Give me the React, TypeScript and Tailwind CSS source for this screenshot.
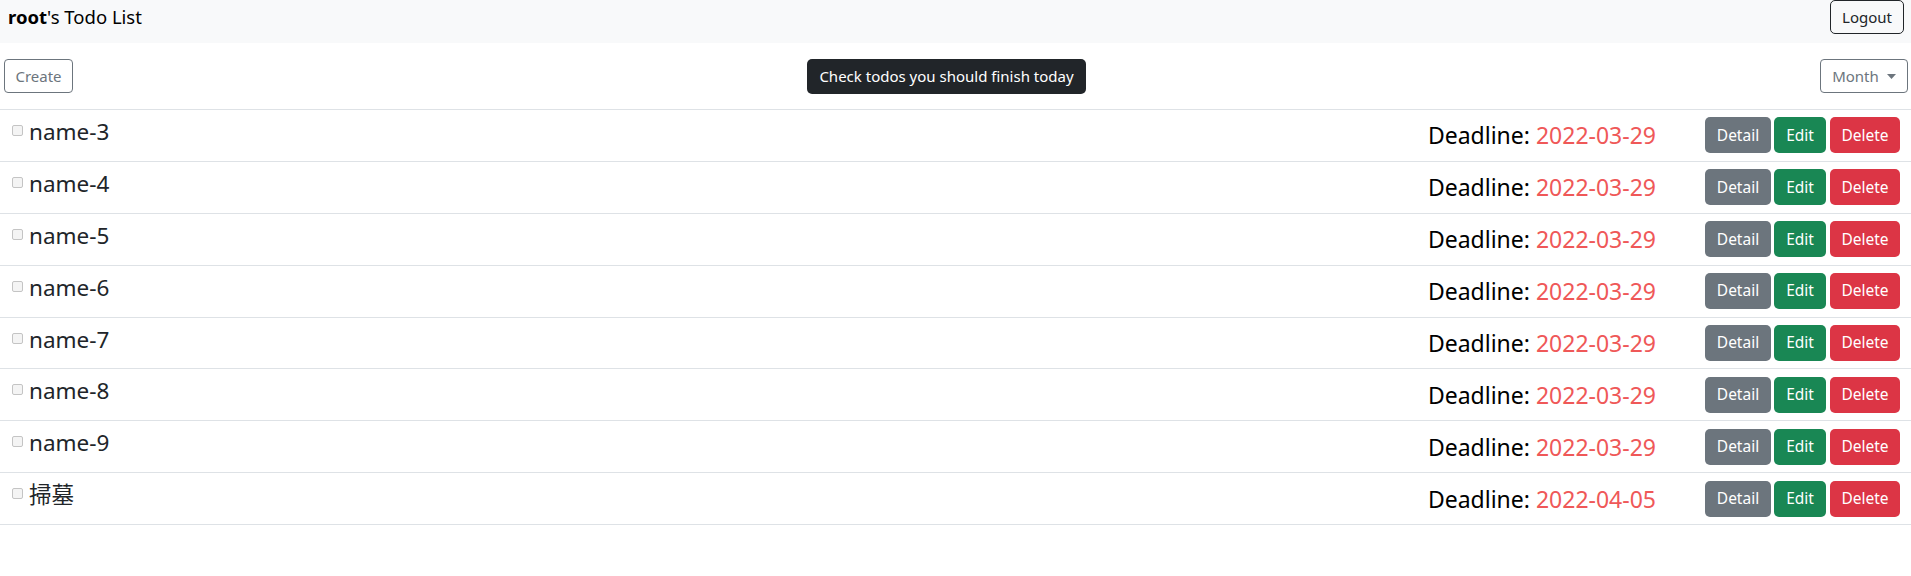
import React from "react";

const rows = [
  { name: "name-3", date: "2022-03-29" },
  { name: "name-4", date: "2022-03-29" },
  { name: "name-5", date: "2022-03-29" },
  { name: "name-6", date: "2022-03-29" },
  { name: "name-7", date: "2022-03-29" },
  { name: "name-8", date: "2022-03-29" },
  { name: "name-9", date: "2022-03-29" },
  { name: "掃墓", date: "2022-04-05" },
];

export default function App() {
  return (
    <div
      className="w-[1911px] h-[576px] bg-white text-[#212529] overflow-hidden"
      style={{ fontFamily: '"Noto Sans", "Noto Sans CJK TC", sans-serif' }}
    >
      <header className="h-[43px] bg-[#f8f9fa] flex items-start justify-between">
        <div className="h-[34px] pl-2 flex items-center text-[18.5px] text-black">
          <span className="font-bold">root</span>
          <span>'s Todo List</span>
        </div>
        <button className="mr-[7px] h-[34px] w-[74px] border border-[#212529] rounded-[5px] text-[15px] text-[#212529] bg-transparent">
          Logout
        </button>
      </header>

      <div className="relative flex items-center justify-between py-4 pl-1 pr-[3px]">
        <button className="h-[34px] w-[69px] border border-[#6c757d] rounded-[4px] text-[15px] text-[#6c757d] bg-white">
          Create
        </button>
        <div className="absolute left-[807px] top-[16px] h-[35px] w-[279px] rounded-[5px] bg-[#212529] text-white text-[15px] flex items-center justify-center">
          Check todos you should finish today
        </div>
        <button className="h-[34px] w-[88px] border border-[#6c757d] rounded-[4px] text-[15px] text-[#6c757d] bg-white flex items-center justify-center gap-[8px]">
          <span>Month</span>
          <svg width="9" height="5" viewBox="0 0 9 5">
            <path d="M0 0 L9 0 L4.5 5 Z" fill="#6c757d" />
          </svg>
        </button>
      </div>

      <div className="border-t border-[#dee2e6]">
        {rows.map((r) => (
          <div
            key={r.name}
            className="flex items-center h-[51.875px] border-b border-[#dee2e6]"
          >
            <div className="flex-1 self-stretch flex items-start pl-3">
              <span className="mt-[15px] w-[11px] h-[11px] border border-[#c4c4c4] rounded-[2px] bg-[#f4f4f4] shrink-0" />
              <span className="ml-[6px] mt-[11px] text-[22.5px] leading-[22px] text-[#212529]">
                {r.name}
              </span>
            </div>
            <div className="text-[23px] leading-[28px] text-black">
              Deadline: <span className="text-[#ef5858]">{r.date}</span>
            </div>
            <div className="ml-[49px] mr-[11px] flex items-center">
              <button className="h-[36px] w-[66px] rounded-[5px] bg-[#6c757d] text-white text-[15.5px]">
                Detail
              </button>
              <button className="ml-[3px] h-[36px] w-[52px] rounded-[5px] bg-[#198754] text-white text-[15.5px]">
                Edit
              </button>
              <button className="ml-[4px] h-[36px] w-[70px] rounded-[5px] bg-[#dc3545] text-white text-[15.5px]">
                Delete
              </button>
            </div>
          </div>
        ))}
      </div>
    </div>
  );
}
